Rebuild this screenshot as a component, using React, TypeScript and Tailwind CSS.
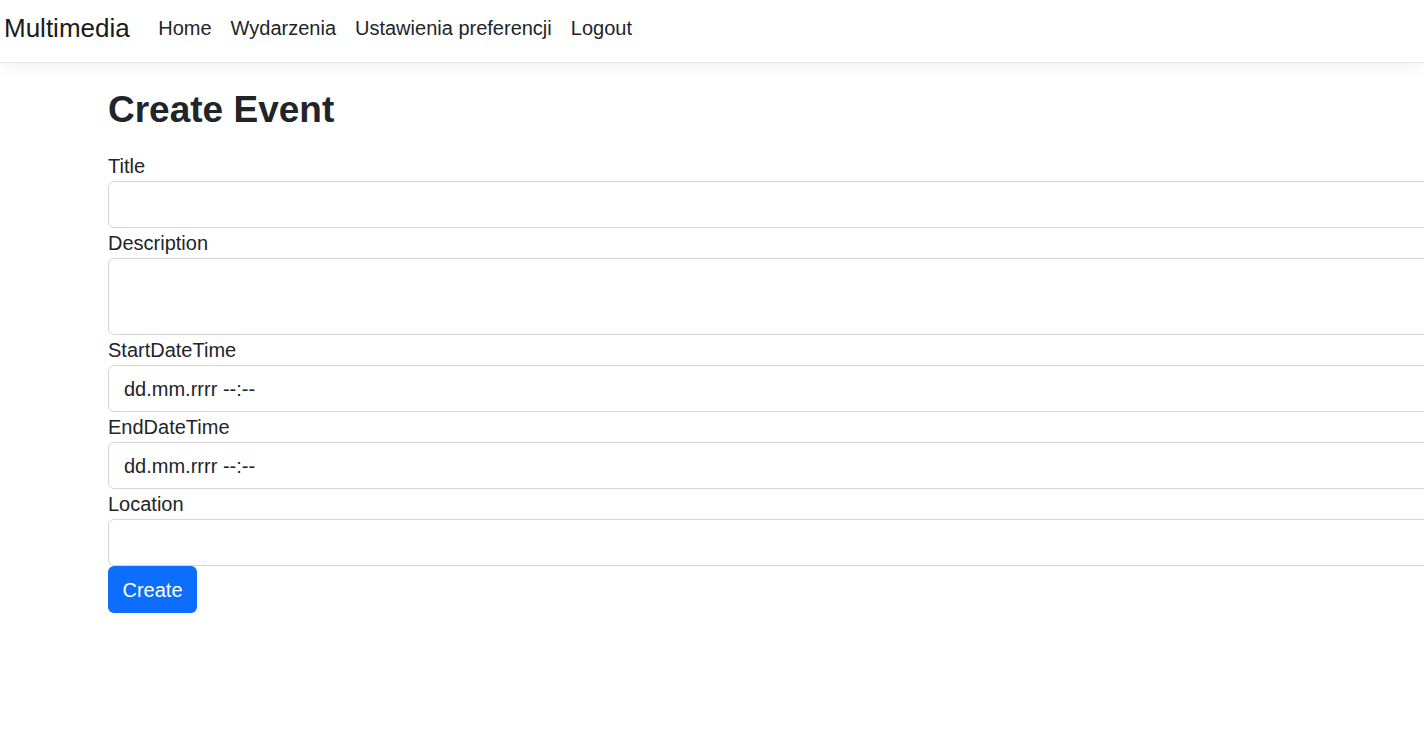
import { useState } from "react";

const navLinks = ["Home", "Wydarzenia", "Ustawienia preferencji", "Logout"];

const inputClass =
  "block h-[47px] w-full rounded-[6px] border border-[#d3d7dc] bg-white px-[15px] text-[20px] text-[#212529] outline-none";

export default function App() {
  const [values, setValues] = useState({
    title: "",
    description: "",
    start: "",
    end: "",
    location: "",
  });

  function update(key: keyof typeof values, value: string) {
    setValues((current) => ({ ...current, [key]: value }));
  }

  return (
    <div
      className="min-h-[738px] w-full overflow-hidden bg-white text-[#212529]"
      style={{ fontFamily: '"Liberation Sans", Arial, sans-serif' }}
    >
      <nav className="relative z-10 flex h-[63px] items-center border-b border-[#e5e5e5] bg-white pb-[6px] pl-[4px] shadow-[0_5px_15px_rgba(0,0,0,0.05)]">
        <a className="mr-[19px] text-[26px] leading-none text-[#1a1a1a]" href="#">
          Multimedia
        </a>
        <ul className="flex items-center">
          {navLinks.map((link) => (
            <li key={link}>
              <a className="block px-[9.5px] text-[20px] leading-none text-[#212529]" href="#">
                {link}
              </a>
            </li>
          ))}
        </ul>
      </nav>

      <main className="pl-[108px] pt-[23px]">
        <h1 className="mb-[17px] text-[37px] font-bold leading-[48px] text-[#212529]">
          Create Event
        </h1>

        <form className="w-[1400px]" onSubmit={(event) => event.preventDefault()}>
          <label className="block text-[20px] leading-[30px]">Title</label>
          <input
            className={inputClass}
            value={values.title}
            onChange={(event) => update("title", event.target.value)}
          />

          <label className="block text-[20px] leading-[30px]">Description</label>
          <textarea
            className="block h-[77px] w-full resize-none rounded-[6px] border border-[#d3d7dc] bg-white px-[15px] py-[7px] text-[20px] text-[#212529] outline-none"
            value={values.description}
            onChange={(event) => update("description", event.target.value)}
          />

          <label className="block text-[20px] leading-[30px]">StartDateTime</label>
          <div className={`${inputClass} flex items-center`}>
            <span className="leading-none">dd.mm.rrrr --:--</span>
          </div>

          <label className="block text-[20px] leading-[30px]">EndDateTime</label>
          <div className={`${inputClass} flex items-center`}>
            <span className="leading-none">dd.mm.rrrr --:--</span>
          </div>

          <label className="block text-[20px] leading-[30px]">Location</label>
          <input
            className={inputClass}
            value={values.location}
            onChange={(event) => update("location", event.target.value)}
          />

          <button
            className="block h-[47px] w-[89px] rounded-[6px] bg-[#0d6efd] text-[20px] text-white"
            type="submit"
          >
            Create
          </button>
        </form>
      </main>
    </div>
  );
}
